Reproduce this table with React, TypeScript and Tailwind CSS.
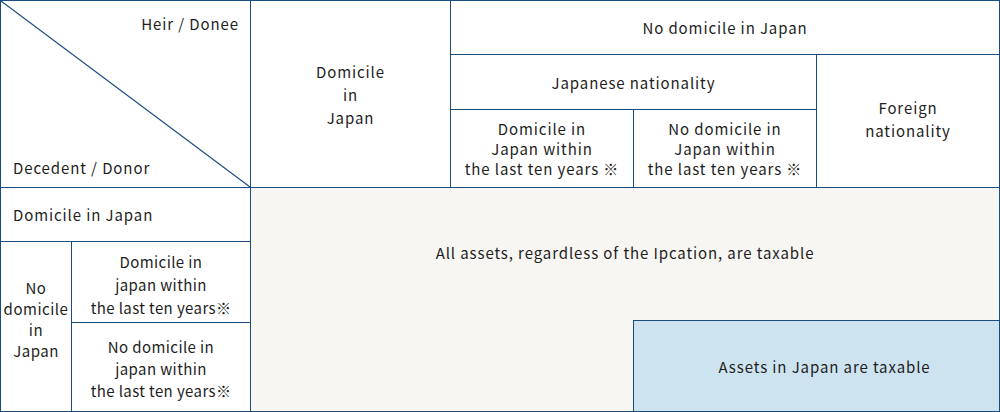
const line = 'bg-[#1b4c80]'

function Cell({ className = '', children }: { className?: string; children?: React.ReactNode }) {
  return (
    <div className={`flex items-center justify-center bg-white text-center ${className}`}>
      {children}
    </div>
  )
}

export default function App() {
  return (
    <div className="h-[412px] w-[1000px] bg-white font-['Noto_Sans_CJK_JP','Noto_Sans',sans-serif] text-[15px] leading-[23px] tracking-[0.9px] text-[#1e1e1e]">
      <div
        className={`grid h-full w-full gap-px p-px ${line} grid-cols-[70px_178px_199px_182px_182px_182px] grid-rows-[53px_54px_77px_53px_80px_88px]`}
      >
        {/* corner cell with diagonal */}
        <div className="relative col-span-2 row-span-3 bg-white">
          <svg className="absolute inset-0 h-full w-full" viewBox="0 0 100 100" preserveAspectRatio="none">
            <line x1="0" y1="0" x2="100" y2="100" stroke="#1b4c80" strokeWidth="1.2" vectorEffect="non-scaling-stroke" />
          </svg>
          <div className="absolute right-[11px] top-[11px]">Heir / Donee</div>
          <div className="absolute bottom-[8px] left-[12px]">Decedent / Donor</div>
        </div>

        <Cell className="row-span-3">
          <span>Domicile<br />in<br />Japan</span>
        </Cell>
        <Cell className="col-span-3">No domicile in Japan</Cell>
        <Cell className="col-span-2">Japanese nationality</Cell>
        <Cell className="row-span-2 pb-1">
          <span>Foreign<br />nationality</span>
        </Cell>
        <Cell className="leading-[20px] pt-px">
          <span>Domicile in<br />Japan within<br />the last ten years ※</span>
        </Cell>
        <Cell className="leading-[20px] pt-px">
          <span>No domicile in<br />Japan within<br />the last ten years ※</span>
        </Cell>

        {/* body */}
        <div className="col-span-2 flex items-center bg-white px-3">Domicile in Japan</div>

        <div className="col-span-4 row-span-3 flex flex-col bg-[#f7f6f2]">
          <div className="flex flex-1 items-center justify-center pb-1">
            All assets, regardless of the Ipcation, are taxable
          </div>
          <div className="flex h-[91px]">
            <div className="flex-1" />
            <div className="flex w-[366px] items-center justify-center border-l border-t border-[#1b4c80] bg-[#cde3f0] pl-4">
              Assets in Japan are taxable
            </div>
          </div>
        </div>

        <Cell className="row-span-2 pb-4 leading-[21px] tracking-[0.5px]">
          <span>No<br />domicile<br />in<br />Japan</span>
        </Cell>
        <Cell className="pt-1 tracking-[0.4px]">
          <span>Domicile in<br />japan within<br />the last ten years※</span>
        </Cell>
        <Cell className="pt-1 leading-[22px] tracking-[0.4px]">
          <span>No domicile in<br />japan within<br />the last ten years※</span>
        </Cell>
      </div>
    </div>
  )
}
